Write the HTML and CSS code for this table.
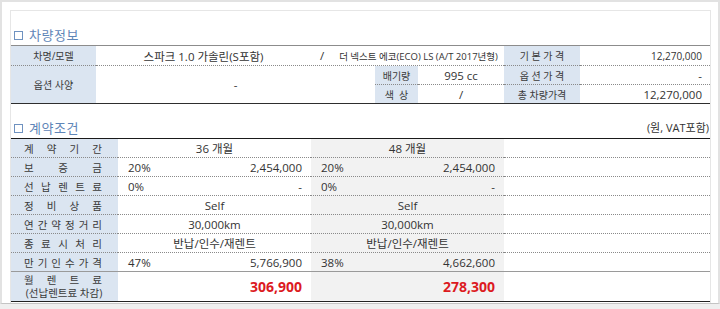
FILE: index.html
```html
<!DOCTYPE html>
<html lang="ko">
<head>
<meta charset="utf-8">
<title>견적</title>
<link rel="stylesheet" href="styles.css">
</head>
<body>
<div class="frame">
  <div class="sheet">
    <div class="title t-first"><span class="box"></span><span class="title-text">차량정보</span></div>
    <div class="t1">
      <div class="cell lbl r1">차명/모델</div>
      <div class="cell model r1">
        <span class="m-name">스파크 1.0 가솔린(S포함)</span>
        <span class="m-slash">/</span>
        <span class="m-sub">더 넥스트 에코(ECO) LS (A/T 2017년형)</span>
      </div>
      <div class="cell lbl r1">기 본 가 격</div>
      <div class="cell num r1 small">12,270,000</div>

      <div class="cell lbl span2">옵션 사양</div>
      <div class="cell ctr span2">-</div>
      <div class="cell lbl">배기량</div>
      <div class="cell ctr">995 cc</div>
      <div class="cell lbl">옵 션 가 격</div>
      <div class="cell num">-</div>

      <div class="cell lbl last">색&nbsp;&nbsp;상</div>
      <div class="cell ctr last">/</div>
      <div class="cell lbl last">총 차량가격</div>
      <div class="cell num big last">12,270,000</div>
    </div>

    <div class="title t-second">
      <span class="title-left"><span class="box"></span><span class="title-text">계약조건</span></span>
      <span class="unit">(원, VAT포함)</span>
    </div>

    <div class="t2">
      <div class="cell lbl dl"><span>계</span><span>약</span><span>기</span><span>간</span></div>
      <div class="cell ctr">36 개월</div>
      <div class="cell ctr gray">48 개월</div>
      <div class="cell"></div>

      <div class="cell lbl dl"><span>보</span><span>증</span><span>금</span></div>
      <div class="cell split"><span>20%</span><span>2,454,000</span></div>
      <div class="cell split gray"><span>20%</span><span>2,454,000</span></div>
      <div class="cell"></div>

      <div class="cell lbl dl"><span>선</span><span>납</span><span>렌</span><span>트</span><span>료</span></div>
      <div class="cell split"><span>0%</span><span>-</span></div>
      <div class="cell split gray"><span>0%</span><span>-</span></div>
      <div class="cell"></div>

      <div class="cell lbl dl"><span>정</span><span>비</span><span>상</span><span>품</span></div>
      <div class="cell ctr">Self</div>
      <div class="cell ctr gray">Self</div>
      <div class="cell"></div>

      <div class="cell lbl dl"><span>연</span><span>간</span><span>약</span><span>정</span><span>거</span><span>리</span></div>
      <div class="cell ctr">30,000km</div>
      <div class="cell ctr gray">30,000km</div>
      <div class="cell"></div>

      <div class="cell lbl dl"><span>종</span><span>료</span><span>시</span><span>처</span><span>리</span></div>
      <div class="cell ctr">반납/인수/재렌트</div>
      <div class="cell ctr gray">반납/인수/재렌트</div>
      <div class="cell"></div>

      <div class="cell lbl dl solid"><span>만</span><span>기</span><span>인</span><span>수</span><span>가</span><span>격</span></div>
      <div class="cell split solid"><span>47%</span><span>5,766,900</span></div>
      <div class="cell split gray solid"><span>38%</span><span>4,662,600</span></div>
      <div class="cell solid"></div>

      <div class="cell lbl two last">
        <div class="dl-line"><span>월</span><span>렌</span><span>트</span><span>료</span></div>
        <div class="sub-line">(선납렌트료 차감)</div>
      </div>
      <div class="cell num red last">306,900</div>
      <div class="cell num red gray last">278,300</div>
      <div class="cell last"></div>
    </div>
  </div>
</div>
</body>
</html>
```

FILE: styles.css
```css
html, body {
  margin: 0;
  padding: 0;
  background: #efefef;
}

.frame {
  width: 720px;
  height: 304px;
  box-sizing: border-box;
  background: #ffffff;
  border: 2px solid #e2e2e2;
  border-bottom: 1px solid #c4c4c4;
  padding: 8px 8px 0 8px;
  font-family: "Open Sans", "Noto Sans CJK KR", sans-serif;
  color: #333333;
}

.sheet {
  width: 701px;
  height: 293px;
  box-sizing: border-box;
  border: 1px solid #e6e6e6;
  border-bottom: none;
}

.title {
  display: flex;
  align-items: center;
  font-size: 13px;
  color: #5f86b8;
  height: 20px;
  line-height: 20px;
}

.t-first {
  padding-top: 14px;
}

.t-second {
  padding-top: 14px;
  justify-content: space-between;
}

.title-left {
  display: flex;
  align-items: center;
}

.box {
  display: inline-block;
  width: 9px;
  height: 9px;
  border: 1px solid #6f92c0;
  margin: 0 6px 0 3px;
  box-sizing: border-box;
}

.title-text {
  letter-spacing: 0.5px;
}

.unit {
  font-size: 11px;
  color: #333333;
  padding-right: 1px;
}

/* tables */
.t1 {
  display: grid;
  grid-template-columns: 85px 279px 43px 86px 76px 130px;
  grid-template-rows: 20px 19px 18px;
  border-top: 1px solid #8c8c8c;
  border-bottom: 1px solid #2e2e2e;
}

.t2 {
  display: grid;
  grid-template-columns: 107px 193px 193px 206px;
  grid-template-rows: repeat(7, 19px) 29px;
  border-top: 1px solid #1a1a1a;
  border-bottom: 1px solid #222222;
}

.cell {
  box-sizing: border-box;
  display: flex;
  align-items: center;
  border-bottom: 1px dotted #8a8a8a;
  font-size: 11.5px;
  white-space: nowrap;
  min-width: 0;
}

.cell.last {
  border-bottom: none;
}

.cell.solid {
  border-bottom: 1px solid #9a9a9a;
}

.lbl {
  background: #dbe5f1;
  justify-content: center;
  font-size: 10px;
  color: #3a3a3a;
}

.t2 .lbl {
  font-size: 10.5px;
}

.span2 {
  grid-row: span 2;
  border-bottom: none;
}

.model {
  grid-column: span 3;
  padding: 0;
}

.m-name {
  width: 215px;
  text-align: center;
  font-size: 11.5px;
}

.m-slash {
  width: 22px;
  text-align: center;
  font-size: 11.5px;
}

.m-sub {
  width: 171px;
  text-align: center;
  font-size: 9.5px;
}

.ctr {
  justify-content: center;
}

.num {
  justify-content: flex-end;
  padding-right: 8px;
}

.t1 .num {
  padding-right: 8px;
}

.small {
  font-size: 10px;
}

.big {
  font-size: 11.5px;
}

.split {
  justify-content: space-between;
  padding: 0 9px 0 10px;
}

.gray {
  background: #f2f2f2;
}

.dl {
  justify-content: space-between;
  padding: 0 16px 0 13px;
}

.two {
  flex-direction: column;
  justify-content: center;
  align-items: stretch;
  padding: 0 14px 0 13px;
  line-height: 13px;
}

.dl-line {
  display: flex;
  justify-content: space-between;
  padding-right: 2px;
}

.sub-line {
  text-align: center;
}

.red {
  color: #dc1a1f;
  font-weight: bold;
  font-size: 14px;
}

.t2 .num {
  padding-right: 9px;
}
```
